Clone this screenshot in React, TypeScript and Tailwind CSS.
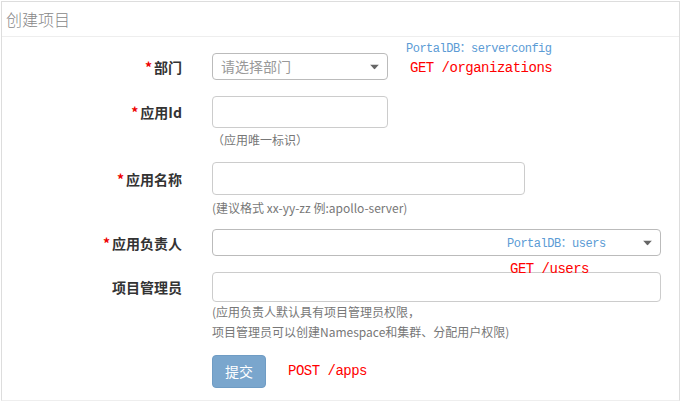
import React from "react";

const cjk = { fontFamily: '"Noto Sans CJK SC", "Noto Sans", sans-serif' };
const mono = { fontFamily: '"Liberation Mono", "Noto Sans CJK SC", monospace' };

function Label({ text, required }: { text: string; required?: boolean }) {
  return (
    <div className="w-[180px] shrink-0 text-right text-[14px] font-bold text-[#333] leading-none">
      {required && <span className="text-[#e00] mr-[2px]">*</span>}
      {text}
    </div>
  );
}

function Caret() {
  return (
    <svg width="9" height="5" viewBox="0 0 9 5" className="absolute right-[8px] top-1/2 -translate-y-1/2">
      <path d="M0 0 L9 0 L4.5 5 Z" fill="#666" />
    </svg>
  );
}

export default function App() {
  return (
    <div className="w-[683px] h-[405px] bg-white pt-px pl-px" style={cjk}>
      <div className="relative w-[679px] h-[400px] border border-[#ddd] border-b-[#eee]">
        {/* header */}
        <div className="h-[35px] border-b border-[#eee] px-[4px] flex items-center">
          <span className="text-[16px] text-[#888] font-light">创建项目</span>
        </div>

        <div className="flex flex-col">
          {/* 部门 */}
          <div className="flex items-center mt-[16px]">
            <Label text="部门" required />
            <div className="relative ml-[30px] w-[176px] h-[27px] border border-[#bbb] rounded-[4px] flex items-center pl-[8px]">
              <span className="text-[14px] text-[#999]">请选择部门</span>
              <Caret />
            </div>
          </div>

          {/* 应用Id */}
          <div className="flex items-center mt-[16px]">
            <Label text="应用Id" required />
            <div className="ml-[30px] w-[176px] h-[32px] border border-[#ccc] rounded-[4px]" />
          </div>
          <div className="ml-[210px] mt-[3px] text-[12px] text-[#777] leading-[17px]">（应用唯一标识）</div>

          {/* 应用名称 */}
          <div className="flex items-center mt-[14px]">
            <Label text="应用名称" required />
            <div className="ml-[30px] w-[313px] h-[33px] border border-[#ccc] rounded-[4px]" />
          </div>
          <div className="ml-[210px] mt-[4px] text-[12px] text-[#777] leading-[17px]">
            (建议格式 xx-yy-zz 例:apollo-server)
          </div>

          {/* 应用负责人 */}
          <div className="flex items-center mt-[13px]">
            <Label text="应用负责人" required />
            <div className="relative ml-[30px] w-[449px] h-[27px] border border-[#bbb] rounded-[4px]">
              <Caret />
            </div>
          </div>

          {/* 项目管理员 */}
          <div className="flex items-center mt-[16px]">
            <Label text="项目管理员" />
            <div className="ml-[30px] w-[449px] h-[30px] border border-[#ccc] rounded-[4px]" />
          </div>
          <div className="ml-[210px] text-[12px] text-[#777] leading-[20px]">
            <div>(应用负责人默认具有项目管理员权限，</div>
            <div>项目管理员可以创建Namespace和集群、分配用户权限)</div>
          </div>

          {/* 提交 */}
          <div className="flex items-center mt-[13px] ml-[210px]">
            <button className="w-[54px] h-[33px] bg-[#7aa6cd] rounded-[4px] text-white text-[14px] border border-[#6f9cc4]">
              提交
            </button>
            <span className="ml-[22px] text-[14px] tracking-[-0.5px] text-[#f00]" style={mono}>POST /apps</span>
          </div>
        </div>

        {/* annotations */}
        <div className="absolute left-[404px] top-[40px] text-[12px] tracking-[-0.5px] text-[#5b9bd5] leading-[14px]" style={mono}>
          PortalDB：serverconfig
        </div>
        <div className="absolute left-[408px] top-[57px] text-[14px] tracking-[-0.5px] text-[#f00] leading-[18px]" style={mono}>
          GET /organizations
        </div>
        <div className="absolute left-[505px] top-[235px] text-[12px] tracking-[-0.5px] text-[#5b9bd5] leading-[14px]" style={mono}>
          PortalDB：users
        </div>
        <div className="absolute left-[508px] top-[258px] text-[14px] tracking-[-0.5px] text-[#f00] leading-[18px]" style={mono}>
          GET /users
        </div>
      </div>
    </div>
  );
}
